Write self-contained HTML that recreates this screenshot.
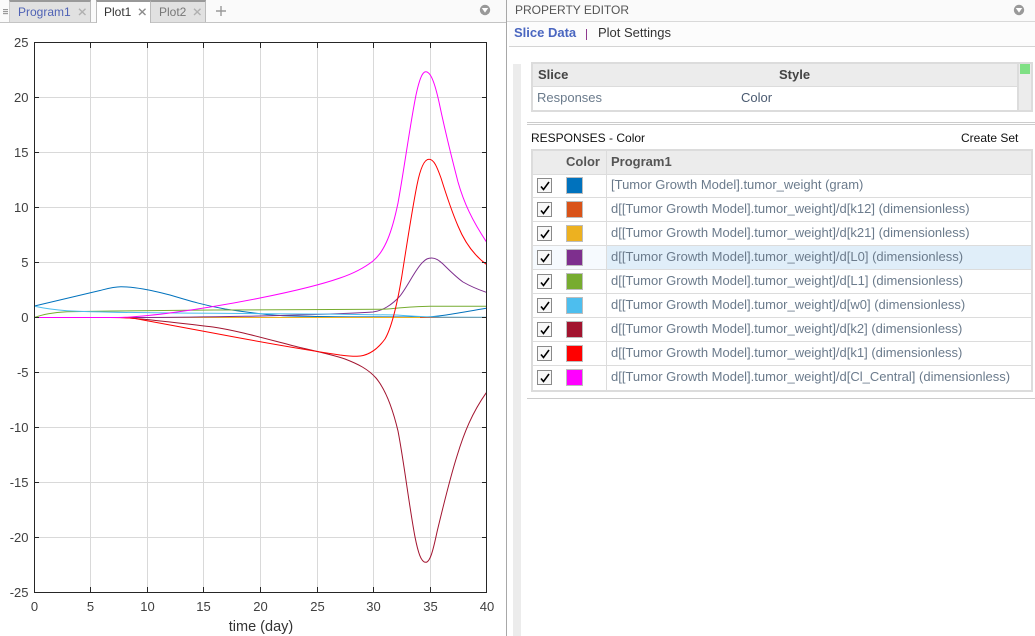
<!DOCTYPE html>
<html><head><meta charset="utf-8">
<style>
html,body{margin:0;padding:0;width:1035px;height:636px;overflow:hidden;background:#fff;font-family:"Liberation Sans",Arial,sans-serif;}
.a{position:absolute;white-space:nowrap;}
.t{font-size:13px;line-height:16px;}
.n{font-size:13px;color:#6b7b8c;left:611px;line-height:16px;}
</style></head><body>
<!-- left tab strip -->
<div class="a" style="left:0;top:0;width:506px;height:22px;background:#fafafa;border-bottom:1px solid #c4c4c4"></div>
<div class="a" style="left:3px;top:9px;width:5px;height:6px;background:repeating-linear-gradient(#999 0 1px,#e8e8e8 1px 2px)"></div>
<div class="a" style="left:9px;top:0;width:82px;height:22px;background:#e1e1e1;border-top:2px solid #999;border-left:1px solid #ccc;border-right:1px solid #bbb;box-sizing:border-box"></div>
<div class="a" style="left:18px;top:4px;font-size:12px;line-height:16px;color:#4f62b5">Program1</div>
<div class="a" style="left:96px;top:0;width:55px;height:23px;background:#fff;border-top:2px solid #999;border-left:1px solid #bbb;border-right:1px solid #bbb;box-sizing:border-box"></div>
<div class="a" style="left:104px;top:4px;font-size:12px;line-height:16px;color:#333">Plot1</div>
<div class="a" style="left:151px;top:0;width:55px;height:22px;background:#e1e1e1;border-top:2px solid #999;border-right:1px solid #bbb;box-sizing:border-box"></div>
<div class="a" style="left:159px;top:4px;font-size:12px;line-height:16px;color:#777">Plot2</div>
<svg class="a" style="left:0;top:0" width="240" height="20" fill="none" stroke-width="1.4">
<path d="M79 8.7L85.5 15M85.5 8.7L79 15" stroke="#b0b0b0"/>
<path d="M139 8.7L145.5 15M145.5 8.7L139 15" stroke="#8c8c8c"/>
<path d="M194 8.7L200.5 15M200.5 8.7L194 15" stroke="#b0b0b0"/>
<path d="M216 11H226M221 6V16" stroke="#999"/>
</svg>
<svg class="a" style="left:479px;top:4px" width="12" height="12"><circle cx="6" cy="6" r="5.2" fill="#999"/><path d="M2.8 4H9.2L6 8.6Z" fill="#fff"/></svg>
<div class="a" style="left:506px;top:0;width:1px;height:636px;background:#a8a8a8"></div>

<!-- plot -->
<svg class="a" style="left:0;top:0" width="506" height="636">
<g stroke="#d9d9d9" stroke-width="1" fill="none" shape-rendering="crispEdges">
<path d="M90.5 43V592M147.5 43V592M203.5 43V592M260.5 43V592M317.5 43V592M373.5 43V592M430.5 43V592"/>
<path d="M34 97.5H487M34 152.5H487M34 207.5H487M34 262.5H487M34 317.5H487M34 372.5H487M34 427.5H487M34 482.5H487M34 537.5H487"/>
</g>
<g fill="none" stroke-width="1" stroke-linejoin="round">
<path stroke="#0072bd" d="M34.5 306 L100 290.5 C108 288.5 114 286.8 121 286.8 C135 286.8 150 290 170 295 C190 301 205 305.5 225 309 C245 312 265 315 283 315.7 C320 317 380 317 427 317 C440 316.5 455 313.5 486.3 308.3"/>
<path stroke="#d95319" d="M34.5 317.5H486"/>
<path stroke="#edb120" d="M34.5 317.5H420"/>
<path stroke="#7e2f8e" d="M34.5 317.5 L147 317.5 C190 317.3 230 316.5 260 316 C300 315 350 313.5 373 312 C382 311 392 305 400 296 C408 286 416 268 423 262 C426 259 428 258 431.7 258 C436 258 439 260.5 443 264 C450 271 456 277 463 282 C470 286 478 289.5 486.3 292.3"/>
<path stroke="#77ac30" d="M34.5 317.5 C42 314.5 52 312.5 67 311.7 L113 311 L213 310 L383 309.3 C395 308.5 410 306.5 430 306.3 L486.3 306.3"/>
<path stroke="#4dbeee" d="M34.5 306.3 C45 308.5 55 310 67 310.7 C90 312 130 312.8 213 313.3 L340 314.3 L397 315 C410 316 425 317 440 317.1 L486.3 317.3"/>
<path stroke="#a2142f" d="M34.5 317.5 L120 317.5 C140 318 175 322.5 213 327 C240 331 270 340 300 347.5 C320 352 335 355.5 345 359 C358 364 368 369 376 378 C386 390 393 410 398 431 C404 462 409 505 415 537 C418 552 421 562.3 425.7 562.3 C430 562.3 433 551 437 532 C443 507 450 478 457 456 C464 433 472 413 486.3 392.7"/>
<path stroke="#ff0000" d="M34.5 317.5 L110 317.5 C120 317.5 128 317.8 135 318.5 C165 324 195 329.5 213 333 C250 340 300 349 340 355 C348 356 352 356.4 357 356.3 C368 356 377 350 385 339 C392 327 397 305 401.7 277 C406 250 412 210 417 185 C420 170 424 159.3 429 159.3 C434 159.3 437 167 441 178 C446 194 452 212 458 226 C465 243 475 256 486.3 264.3"/>
<path stroke="#ff00ff" d="M34.5 317.5 L118 317.5 C130 317.4 145 316 166 313.5 C200 309 235 303 260 298 C290 292 320 285 340 278 C352 274 364 268 373 261 C385 251 392 232 398 203 C404 170 410 125 416 95 C419 81 422 71.8 425.7 71.8 C431 71.8 435 84 439 102 C444 126 451 155 458 182 C464 203 472 220 486.3 241.7"/>
</g>
<g stroke="#262626" stroke-width="1" fill="none" shape-rendering="crispEdges">
<path d="M34.5 42.5H486.5V592.5H34.5Z"/>
<path d="M90.5 43V48M147.5 43V48M203.5 43V48M260.5 43V48M317.5 43V48M373.5 43V48M430.5 43V48"/>
<path d="M90.5 587V592M147.5 587V592M203.5 587V592M260.5 587V592M317.5 587V592M373.5 587V592M430.5 587V592"/>
<path d="M34 97.5H39M34 152.5H39M34 207.5H39M34 262.5H39M34 317.5H39M34 372.5H39M34 427.5H39M34 482.5H39M34 537.5H39"/>
<path d="M482 97.5H487M482 152.5H487M482 207.5H487M482 262.5H487M482 317.5H487M482 372.5H487M482 427.5H487M482 482.5H487M482 537.5H487"/>
</g>
<g font-family="Liberation Sans, Arial, sans-serif" font-size="13" fill="#404040" text-anchor="end">
<text x="28.5" y="47">25</text><text x="28.5" y="102">20</text><text x="28.5" y="157">15</text><text x="28.5" y="212">10</text><text x="28.5" y="267">5</text><text x="28.5" y="322">0</text><text x="28.5" y="377">-5</text><text x="28.5" y="432">-10</text><text x="28.5" y="487">-15</text><text x="28.5" y="542">-20</text><text x="28.5" y="597">-25</text>
</g>
<g font-family="Liberation Sans, Arial, sans-serif" font-size="13" fill="#404040" text-anchor="middle">
<text x="34.5" y="611">0</text><text x="90.5" y="611">5</text><text x="147.5" y="611">10</text><text x="203.5" y="611">15</text><text x="260.5" y="611">20</text><text x="317.5" y="611">25</text><text x="373.5" y="611">30</text><text x="430.5" y="611">35</text><text x="487" y="611">40</text>
<text x="261" y="631" font-size="14.5" fill="#333">time (day)</text>
</g>
</svg>

<!-- right header -->
<div class="a" style="left:507px;top:0;width:528px;height:21px;background:#fafafa;border-bottom:1px solid #d9d9d9"></div>
<div class="a" style="left:515px;top:2px;font-size:12px;line-height:16px;color:#555">PROPERTY EDITOR</div>
<svg class="a" style="left:1013px;top:4px" width="12" height="12"><circle cx="6" cy="6" r="5.2" fill="#999"/><path d="M2.8 4H9.2L6 8.6Z" fill="#fff"/></svg>
<div class="a" style="left:509px;top:22px;width:526px;height:24px;background:#fcfcfc;border-bottom:1px solid #d4d4d4"></div>
<div class="a t" style="left:514px;top:25px;font-weight:bold;color:#4a66c0">Slice Data</div>
<div class="a" style="left:586px;top:29px;width:1px;height:11px;background:#8e3a8e"></div>
<div class="a t" style="left:598px;top:25px;color:#333">Plot Settings</div>

<!-- side strip -->
<div class="a" style="left:513px;top:64px;width:8px;height:572px;background:#ececec"></div>

<!-- slice table -->
<div class="a" style="left:531px;top:62px;width:502px;height:50px;background:#ececec;border:2px solid #dcdcdc;box-sizing:border-box"></div>
<div class="a" style="left:533px;top:86px;width:484px;height:24px;background:#fff;border-top:1px solid #dcdcdc;box-sizing:border-box"></div>
<div class="a" style="left:1017px;top:64px;width:2px;height:46px;background:#dcdcdc"></div>
<div class="a" style="left:1020px;top:64px;width:10px;height:10px;background:#7fe084"></div>
<div class="a t" style="left:538px;top:67px;font-weight:bold;color:#444">Slice</div>
<div class="a t" style="left:779px;top:67px;font-weight:bold;color:#444">Style</div>
<div class="a t" style="left:537px;top:90px;color:#6b7b8c">Responses</div>
<div class="a t" style="left:741px;top:90px;color:#4a5a70">Color</div>
<div class="a" style="left:527px;top:122px;width:508px;height:3px;border-top:1px solid #ccc;border-bottom:1px solid #ccc;box-sizing:border-box"></div>

<div class="a" style="left:531px;top:130px;font-size:12px;line-height:16px;color:#111">RESPONSES - Color</div>
<div class="a" style="left:961px;top:130px;font-size:12px;line-height:16px;color:#111">Create Set</div>

<!-- responses table -->
<div class="a" style="left:531px;top:149px;width:502px;height:243px;background:#fff;border:2px solid #dcdcdc;box-sizing:border-box"></div>
<div class="a" style="left:533px;top:151px;width:498px;height:23px;background:#ececec;border-bottom:1px solid #dcdcdc"></div>
<div class="a" style="left:533px;top:246px;width:73px;height:23px;background:#f6fafe"></div>
<div class="a" style="left:607px;top:246px;width:424px;height:23px;background:#e0eef9"></div>
<div class="a" style="left:606px;top:151px;width:1px;height:239px;background:#dcdcdc"></div>
<div class="a" style="left:533px;top:197px;width:498px;height:1px;background:#dcdcdc"></div>
<div class="a" style="left:533px;top:221px;width:498px;height:1px;background:#dcdcdc"></div>
<div class="a" style="left:533px;top:245px;width:498px;height:1px;background:#dcdcdc"></div>
<div class="a" style="left:533px;top:269px;width:498px;height:1px;background:#dcdcdc"></div>
<div class="a" style="left:533px;top:293px;width:498px;height:1px;background:#dcdcdc"></div>
<div class="a" style="left:533px;top:317px;width:498px;height:1px;background:#dcdcdc"></div>
<div class="a" style="left:533px;top:341px;width:498px;height:1px;background:#dcdcdc"></div>
<div class="a" style="left:533px;top:365px;width:498px;height:1px;background:#dcdcdc"></div>
<div class="a t" style="left:566px;top:154px;font-weight:bold;color:#555">Color</div>
<div class="a t" style="left:611px;top:154px;font-weight:bold;color:#555">Program1</div>

<svg class="a" style="left:533px;top:174px" width="60" height="216">
<g fill="#f8f8f8" stroke="#8a8a8a" stroke-width="1" shape-rendering="crispEdges">
<rect x="4.5" y="4.5" width="14" height="14"/><rect x="4.5" y="28.5" width="14" height="14"/><rect x="4.5" y="52.5" width="14" height="14"/><rect x="4.5" y="76.5" width="14" height="14"/><rect x="4.5" y="100.5" width="14" height="14"/><rect x="4.5" y="124.5" width="14" height="14"/><rect x="4.5" y="148.5" width="14" height="14"/><rect x="4.5" y="172.5" width="14" height="14"/><rect x="4.5" y="196.5" width="14" height="14"/>
</g>
<g fill="none" stroke="#000" stroke-width="1.6">
<path d="M8 12.5L10.5 15.5L16 8"/><path d="M8 36.5L10.5 39.5L16 32"/><path d="M8 60.5L10.5 63.5L16 56"/><path d="M8 84.5L10.5 87.5L16 80"/><path d="M8 108.5L10.5 111.5L16 104"/><path d="M8 132.5L10.5 135.5L16 128"/><path d="M8 156.5L10.5 159.5L16 152"/><path d="M8 180.5L10.5 183.5L16 176"/><path d="M8 204.5L10.5 207.5L16 200"/>
</g>
<g stroke="#bdbdbd" stroke-width="1" shape-rendering="crispEdges">
<rect x="33.5" y="3.5" width="16" height="16" fill="#0072bd"/>
<rect x="33.5" y="27.5" width="16" height="16" fill="#d95319"/>
<rect x="33.5" y="51.5" width="16" height="16" fill="#edb120"/>
<rect x="33.5" y="75.5" width="16" height="16" fill="#7e2f8e"/>
<rect x="33.5" y="99.5" width="16" height="16" fill="#77ac30"/>
<rect x="33.5" y="123.5" width="16" height="16" fill="#4dbeee"/>
<rect x="33.5" y="147.5" width="16" height="16" fill="#a2142f"/>
<rect x="33.5" y="171.5" width="16" height="16" fill="#ff0000"/>
<rect x="33.5" y="195.5" width="16" height="16" fill="#ff00ff"/>
</g>
</svg>

<div class="a n" style="top:177px">[Tumor Growth Model].tumor_weight (gram)</div>
<div class="a n" style="top:201px">d[[Tumor Growth Model].tumor_weight]/d[k12] (dimensionless)</div>
<div class="a n" style="top:225px">d[[Tumor Growth Model].tumor_weight]/d[k21] (dimensionless)</div>
<div class="a n" style="top:249px">d[[Tumor Growth Model].tumor_weight]/d[L0] (dimensionless)</div>
<div class="a n" style="top:273px">d[[Tumor Growth Model].tumor_weight]/d[L1] (dimensionless)</div>
<div class="a n" style="top:297px">d[[Tumor Growth Model].tumor_weight]/d[w0] (dimensionless)</div>
<div class="a n" style="top:321px">d[[Tumor Growth Model].tumor_weight]/d[k2] (dimensionless)</div>
<div class="a n" style="top:345px">d[[Tumor Growth Model].tumor_weight]/d[k1] (dimensionless)</div>
<div class="a n" style="top:369px">d[[Tumor Growth Model].tumor_weight]/d[Cl_Central] (dimensionless)</div>
<div class="a" style="left:527px;top:398px;width:508px;height:1px;background:#ccc"></div>
</body></html>
